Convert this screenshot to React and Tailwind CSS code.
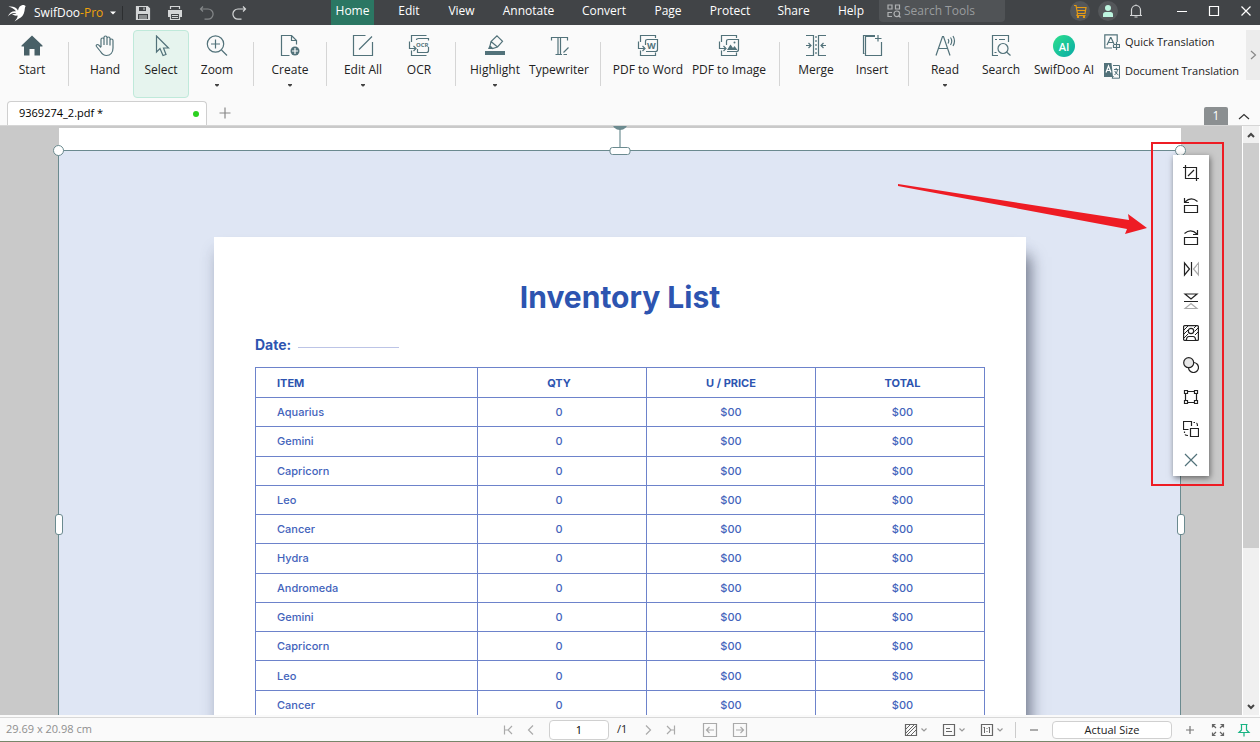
import React from "react";
import { clsx } from "clsx";

const Icon = ({ size = 22, className, children }) => (
  <svg
    width={size}
    height={size}
    viewBox={`0 0 ${size} ${size}`}
    fill="none"
    stroke="currentColor"
    strokeWidth="1.2"
    aria-hidden="true"
    className={clsx("shrink-0", className)}
  >
    {children}
  </svg>
);

const Caret = ({ className }) => (
  <svg width="6" height="4" viewBox="0 0 6 4" className={className} aria-hidden="true">
    <path d="M0 .5H6L3 3.5Z" fill="currentColor" />
  </svg>
);

/* ribbon icons */

const StartIcon = () => (
  <Icon>
    <path d="M11 0.5L21.5 10.5V11.5H19V20.5H13.5V14H8.5V20.5H3V11.5H0.5V10.5Z" fill="#486067" stroke="none" />
  </Icon>
);

const HandIcon = () => (
  <Icon>
    <path d="M7 12V4.5a1.5 1.5 0 0 1 3 0V10M10 4.5V2.5a1.5 1.5 0 0 1 3 0V10M13 3.5a1.5 1.5 0 0 1 3 0V10.5M16 5.5a1.5 1.5 0 0 1 3 0V13c0 4.5-2.5 7.5-6.5 7.5-3 0-4.5-1.5-6-4L2.5 11.5c-1-1.7 1-2.7 2.3-1.3L7 12.5" />
  </Icon>
);

const SelectIcon = () => (
  <Icon>
    <path d="M6.5 1V17L10 13.5L13 20.5L16 19.5L13.5 13H18.5Z" />
  </Icon>
);

const ZoomIcon = () => (
  <Icon>
    <circle cx="9.5" cy="9" r="8.2" />
    <path d="M9.5 4.5V13.5M5 9H14M15.5 15L21 20.5" />
  </Icon>
);

const CreateIcon = () => (
  <Icon>
    <path d="M10.5 20.5H2.5V.5H12.5L17.5 5.5V9.5M12.5 .5V5.5H17.5" />
    <circle cx="16" cy="16" r="4.5" fill="currentColor" stroke="none" />
    <path d="M16 13V19M13 16H19" stroke="#fff" />
  </Icon>
);

const EditIcon = () => (
  <Icon>
    <path d="M13.5 .5H1.5V20.5H20.5V7M7 14.5L20 1.5" />
  </Icon>
);

const ConvertFrame = ({ children }) => (
  <Icon>
    <path d="M3.5 7V.5H18.5V3M3.5 15.5V20.5H18.5V17.5M1.5 6.5V13.5H7M5.5 11L8 13.5L5.5 16" />
    <path d="M8.5 10V6.5Q8.5 4.5 10.5 4.5H20.5V14.5Q20.5 16.5 18.5 16.5H9" />
    {children}
  </Icon>
);

const OcrIcon = () => (
  <Icon>
    <path d="M3.5 7V.5H18.5M3.5 15.5V20.5H18.5M1.5 6.5V13.5H7M5.5 11L8 13.5L5.5 16" />
    <path d="M8.5 5V4.5Q8.5 3.5 10.5 3.5H20.5V5.5M20.5 12V15.5Q20.5 17.5 18.5 17.5H9.5V14" />
    <text x="8" y="11.5" fontSize="6" fontWeight="700" fill="currentColor" stroke="none">OCR</text>
  </Icon>
);

const HighlightIcon = () => (
  <Icon>
    <path d="M1 16H21V20H1Z" fill="currentColor" stroke="none" />
    <path d="M13 .8L18.5 6.3L13.5 12L8.5 13.5L6 11L7 6.5ZM7 6.5L13.5 12" />
    <path d="M5.5 10.5L9 14H4Z" fill="currentColor" stroke="none" />
  </Icon>
);

const TypewriterIcon = () => (
  <Icon>
    <path d="M3.5 5.5V2.5H19.5V5.5M10 3V19.5M12.5 3V19.5M7.5 19.5H14M15.5 19.5H19M15.5 17.5L20.5 12.5" />
  </Icon>
);

const ToWordIcon = () => (
  <ConvertFrame>
    <text x="10" y="14" fontSize="9" fontWeight="700" fill="currentColor" stroke="none">W</text>
  </ConvertFrame>
);

const ToImageIcon = () => (
  <ConvertFrame>
    <path d="M9 15L12.5 9.5L15 13L16.5 11L19.5 15Z" fill="currentColor" stroke="none" />
    <circle cx="16.5" cy="7.5" r="1" fill="currentColor" stroke="none" />
  </ConvertFrame>
);

const MergeIcon = () => (
  <Icon>
    <path d="M1 .5H8.5V20.5H1M21 .5H13.5V20.5H21M1 10.5H6M3.5 8L6 10.5L3.5 13M21 10.5H16M18.5 8L16 10.5L18.5 13" />
    <path d="M11 1V21" strokeDasharray="2 2" />
  </Icon>
);

const InsertIcon = () => (
  <Icon>
    <path d="M14 1.5H4.5V20.5H20.5V7M3.5 18.5H2.5V.5H14M17 0V6.5M14 3.5H20.5" />
  </Icon>
);

const ReadIcon = () => (
  <Icon>
    <path d="M2 20.5L8.5 1.5H9.5L16 20.5M4.5 13.5H13.5M14 4Q15.5 6 14 8.5M16.5 2.5Q19 6 16.5 10M19 1Q22 6 19 11" />
  </Icon>
);

const SearchIcon = () => (
  <Icon>
    <path d="M8 20.5H2.5V.5H18.5V7M5 4.5H7M9 4.5H15M4.5 17.5H6.5" />
    <circle cx="13" cy="13.5" r="5" />
    <path d="M16.5 17L20.5 20.5" />
  </Icon>
);

const AiIcon = () => (
  <span className="flex h-[22px] w-[22px] items-center justify-center rounded-full bg-linear-to-br from-[#2ce08a] to-[#0aa9a5] text-[11px] leading-none font-semibold text-white">
    AI
  </span>
);

const ribbon = [
  [{ label: "Start", icon: StartIcon }],
  [
    { label: "Hand", icon: HandIcon },
    { label: "Select", icon: SelectIcon, active: true },
    { label: "Zoom", icon: ZoomIcon, menu: true },
  ],
  [{ label: "Create", icon: CreateIcon, menu: true }],
  [
    { label: "Edit All", icon: EditIcon, menu: true },
    { label: "OCR", icon: OcrIcon },
  ],
  [
    { label: "Highlight", icon: HighlightIcon, menu: true, width: "w-[62px]" },
    { label: "Typewriter", icon: TypewriterIcon, width: "w-[66px]" },
  ],
  [
    { label: "PDF to Word", icon: ToWordIcon, width: "w-[78px]" },
    { label: "PDF to Image", icon: ToImageIcon, width: "w-[84px]" },
  ],
  [
    { label: "Merge", icon: MergeIcon },
    { label: "Insert", icon: InsertIcon },
  ],
  [
    { label: "Read", icon: ReadIcon, menu: true },
    { label: "Search", icon: SearchIcon },
    { label: "SwifDoo AI", icon: AiIcon, width: "w-[70px]" },
  ],
];

const menus = [
  { label: "Edit", width: "w-[50px]" },
  { label: "View", width: "w-[55px]" },
  { label: "Annotate", width: "w-[79px]" },
  { label: "Convert", width: "w-[72px]" },
  { label: "Page", width: "w-[56px]" },
  { label: "Protect", width: "w-[68px]" },
  { label: "Share", width: "w-[59px]" },
  { label: "Help", width: "w-[56px]" },
];

const TitleBar = () => (
  <header className="flex h-[25px] shrink-0 items-center bg-[#414447] text-white">
    <div className="flex w-[331px] shrink-0 items-center">
      <svg width="20" height="18" viewBox="0 0 20 18" className="ml-[7px]" fill="#fff" aria-hidden="true">
        <path d="M11 6.5C11.5 3.5 13 1.5 15.5 1C17 .7 17.5 1.5 18.8 2C17.8 3 18 4.5 17.5 7C16.8 11 14.5 13.5 12 14.5L7.5 17.5C9.5 15 11 13 10.5 11.5C8 12 6 11 5 10C7 10.2 8.5 10 9.5 9.3C6 8.2 3.5 9.5 .8 12.5C2.5 8.5 5.5 6.8 9 7.3C7 4.8 4.5 3.2 1.5 2.8C5.5 1.8 9.5 3.5 11 6.5Z" />
      </svg>
      <span className="ml-[7px] w-[68px] text-xs whitespace-nowrap">
        SwifDoo<span className="text-[#f0a30a]">-Pro</span>
      </span>
      <button aria-label="Application menu" className="ml-2 flex h-5 w-[6px] items-center">
        <Caret />
      </button>
      <span className="ml-[6px] h-[14px] w-px bg-[#2c2e30]" />
      <button aria-label="Save" className="ml-3 flex w-4 justify-center text-[#d4d6d7]">
        <Icon size={16}>
          <path d="M1.5 1.5H12.5L14.5 3.5V14.5H1.5Z" fill="currentColor" />
          <path d="M4 2H11V6H4ZM3 9H13V14H3Z" fill="#414447" stroke="none" />
          <path d="M9 2.5V5M4 11H12M4 13H12" strokeWidth="1" />
        </Icon>
      </button>
      <button aria-label="Print" className="ml-4 flex w-4 justify-center text-[#d4d6d7]">
        <Icon size={16}>
          <path d="M3.5 4V1.5H12.5V4" />
          <path d="M1 5H15V12H1Z" fill="currentColor" stroke="none" />
          <path d="M3.5 8.5H12.5V14.5H3.5Z" fill="#414447" />
          <path d="M5 10.5H11M5 12.5H11" strokeWidth="1" />
        </Icon>
      </button>
      <button aria-label="Undo" className="ml-4 flex w-4 justify-center text-[#85888a]">
        <Icon size={16}>
          <path d="M4 1.5L1.5 4L4 6.5M1.5 4H9A5 5 0 0 1 9 14.2H5.5" />
        </Icon>
      </button>
      <button aria-label="Redo" className="ml-4 flex w-4 justify-center text-[#d4d6d7]">
        <Icon size={16}>
          <path d="M12 1.5L14.5 4L12 6.5M14.5 4H7A5 5 0 0 0 7 14.2H10.5" />
        </Icon>
      </button>
    </div>

    <nav className="flex h-full items-center text-xs">
      <button className="mr-[10px] h-full w-[43px] bg-[#2b7763] pb-[3px]">Home</button>
      {menus.map((menu) => (
        <button key={menu.label} className={clsx("h-full pb-[3px]", menu.width)}>
          {menu.label}
        </button>
      ))}
    </nav>

    <label className="flex h-[22px] w-[126px] shrink-0 items-center gap-[3px] self-start rounded-b-sm bg-[#505356] pl-2 text-[#b0b2b4]">
      <Icon size={14}>
        <path d="M1 1H5V5H1ZM8.5 1H12.5V5H8.5ZM5 8.5H1V12.5H5" />
        <circle cx="9.8" cy="9.8" r="2.8" />
        <path d="M11.5 11.5L13.5 13.5" />
      </Icon>
      <input
        aria-label="Search Tools"
        placeholder="Search Tools"
        className="w-full min-w-0 bg-transparent text-xs outline-none placeholder:text-[#999c9e]"
      />
    </label>

    <div className="ml-auto flex items-center pr-[2px]">
      <button aria-label="Store" className="mb-1 flex h-5 w-5 items-center justify-center rounded-full bg-[#54575a] text-[#e69b13]">
        <Icon size={14}>
          <path d="M1 1.5H3L4.5 9.5H12L13 3.5H3.5M4.5 6.5H12.5M4.5 9.5L4 11.5H12.5" />
          <circle cx="5" cy="13" r=".6" />
          <circle cx="11" cy="13" r=".6" />
        </Icon>
      </button>
      <button aria-label="Account" className="mb-1 ml-2 flex h-5 w-5 items-center justify-center rounded-full bg-[#54575a] text-[#bdf5df]">
        <Icon size={14}>
          <circle cx="7" cy="4" r="3" fill="currentColor" stroke="none" />
          <path d="M2 13V10.5Q2 8 4.5 8H9.5Q12 8 12 10.5V13Z" fill="currentColor" stroke="none" />
        </Icon>
      </button>
      <button aria-label="Notifications" className="mr-[23px] mb-1 ml-[11px] text-[#d4d6d7]">
        <Icon size={14}>
          <path d="M1 11.5H13M2.5 11V6A4.5 4.5 0 0 1 11.5 6V11M7 .5V1.5M5.5 13H8.5" />
        </Icon>
      </button>
      <button aria-label="Minimize" className="mb-[3px] flex w-8 justify-center">
        <Icon size={12}>
          <path d="M1 6.5H11" strokeWidth="1" />
        </Icon>
      </button>
      <button aria-label="Maximize" className="mb-[3px] flex w-8 justify-center">
        <Icon size={12}>
          <path d="M1.5 1.5H10.5V10.5H1.5Z" />
        </Icon>
      </button>
      <button aria-label="Close" className="mb-[3px] flex w-7 justify-center pl-1">
        <Icon size={12}>
          <path d="M1.5 1.5L10.5 10.5M10.5 1.5L1.5 10.5" />
        </Icon>
      </button>
    </div>
  </header>
);

const RibbonButton = ({ label, icon: Glyph, active, menu, width = "w-14" }) => (
  <button
    className={clsx(
      "flex h-[68px] shrink-0 flex-col items-center rounded-sm border pt-1 text-[#52727a]",
      width,
      active ? "border-[#bfe9da] bg-[#e6f4ee]" : "border-transparent"
    )}
  >
    <Glyph />
    <span className="mt-1 text-xs leading-[18px] whitespace-nowrap text-[#222]">{label}</span>
    {menu && (
      <svg width="4" height="3" viewBox="0 0 4 3" className="mt-[5px] text-[#444]" aria-hidden="true">
        <path d="M0 0H4V1L2.5 2.5H1.5L0 1Z" fill="currentColor" />
      </svg>
    )}
  </button>
);

const Ribbon = () => (
  <div className="flex h-[73px] shrink-0 pt-[5px] pl-1">
    {ribbon.map((group, i) => (
      <div key={i} className="flex shrink-0">
        {i > 0 && <span className="mx-2 mt-3 h-11 w-px bg-[#d5d5d5]" />}
        {group.map((item) => (
          <RibbonButton key={item.label} {...item} />
        ))}
      </div>
    ))}
    <div className="ml-[5px] flex min-w-0 flex-1 flex-col gap-3 pt-[3px] text-[11px] text-[#222]">
      <button className="flex items-center gap-[5px] leading-[17px] whitespace-nowrap">
        <Icon size={16} className="text-[#52727a]">
          <path d="M8 14H.8V.8H13.2V8M3 11L6.5 3.5H7L10 10M4 8.5H9M12.5 8V16M10 10.5H15.5V13.5H9.5V10.5" />
        </Icon>
        Quick Translation
      </button>
      <button className="flex items-center gap-[5px] leading-[17px] whitespace-nowrap">
        <Icon size={16} className="text-[#52727a]">
          <path d="M0 0H7.5L9 14H0Z" fill="currentColor" stroke="none" />
          <path d="M2 9.5L4.5 3L7 9.5M3 7.5H6" stroke="#fff" />
          <path d="M9 2.5H15.5V15.2H8L9.5 13M10 6.5H14.5M12.2 5V6.5M10.5 12Q13 10.5 13.5 7M10.8 8Q11.5 10.5 14.5 12" strokeWidth="1" />
        </Icon>
        Document Translation
      </button>
    </div>
    <button aria-label="Scroll ribbon right" className="flex h-[50px] w-[14px] shrink-0 items-center justify-center bg-[#ececec] text-[#888]">
      <Icon size={12}>
        <path d="M4 2L8.5 6L4 10" />
      </Icon>
    </button>
  </div>
);

const TabStrip = () => (
  <div className="flex h-7 shrink-0 items-end border-b border-[#d6d6d6] pl-[7px]">
    <div className="flex h-6 w-[200px] items-center rounded-t-[4px] border border-b-0 border-[#cfcfcf] bg-white pr-[7px] pl-[11px] text-[11px] text-black">
      9369274_2.pdf *
      <span className="ml-auto h-[6px] w-[6px] rounded-full bg-[#2bd11f]" />
    </div>
    <button aria-label="New tab" className="mb-[6px] ml-3 text-[#888]">
      <Icon size={12}>
        <path d="M6 .5V11.5M.5 6H11.5" />
      </Icon>
    </button>
    <button className="ml-auto h-[18px] w-6 rounded-t-xs bg-[#8b8f91] text-xs leading-4 text-white">1</button>
    <button aria-label="Collapse ribbon" className="mr-[10px] mb-[2px] ml-[10px] text-[#333]">
      <Icon size={12}>
        <path d="M1 8L6 3.5L11 8" />
      </Icon>
    </button>
  </div>
);

const items = [
  "Aquarius",
  "Gemini",
  "Capricorn",
  "Leo",
  "Cancer",
  "Hydra",
  "Andromeda",
  "Gemini",
  "Capricorn",
  "Leo",
  "Cancer",
];

const InventorySheet = () => (
  <article className="mt-[86px] mr-[154px] ml-[155px] h-[600px] bg-white px-[41px] pt-10 font-[Inter,sans-serif] text-[#2d54b0] shadow-[7px_18px_14px_-2px_rgba(40,45,65,0.5),0px_12px_14px_0px_rgba(70,80,110,0.2)]">
    <h1 className="text-center text-[30px] leading-10 font-bold">Inventory List</h1>
    <div className="mt-[18px] flex h-5 items-center text-sm font-bold">
      Date:
      <span className="mt-[5px] ml-[7px] h-px w-[101px] bg-[#bcc4e6]" />
    </div>
    <table className="mt-3 h-[353px] w-full table-fixed border-collapse text-[11px] leading-4 [&_td]:border [&_td]:border-[#6d83cb] [&_td]:p-0 [&_th]:h-[30px] [&_th]:border [&_th]:border-[#6d83cb] [&_th]:p-0">
      <colgroup>
        <col className="w-[222px]" />
        <col />
        <col />
        <col />
      </colgroup>
      <thead>
        <tr>
          <th className="text-left">
            <span className="pl-[21px]">ITEM</span>
          </th>
          <th>
            <span className="pr-[6px]">QTY</span>
          </th>
          <th>U / PRICE</th>
          <th>
            <span className="pl-[5px]">TOTAL</span>
          </th>
        </tr>
      </thead>
      <tbody className="text-center font-medium text-[#4363bb]">
        {items.map((item, i) => (
          <tr key={i}>
            <td className="text-left">
              <span className="pl-[21px]">{item}</span>
            </td>
            <td>
              <span className="pr-[6px]">0</span>
            </td>
            <td>$00</td>
            <td>
              <span className="pl-[5px]">$00</span>
            </td>
          </tr>
        ))}
      </tbody>
    </table>
  </article>
);

const tools = [
  {
    label: "Crop",
    path: <path d="M0 2.5H13.5V16M2.5 0V13.5H16M5 11L11 5" />,
  },
  {
    label: "Rotate left",
    path: <path d="M1.5 8.5H14.5V15.5H1.5ZM1.5 1V5.5H6M2 5Q8-1 14.5 4.5" />,
  },
  {
    label: "Rotate right",
    path: <path d="M1.5 8.5H14.5V15.5H1.5ZM14.5 1V5.5H10M14 5Q8-1 1.5 4.5" />,
  },
  {
    label: "Flip horizontal",
    path: (
      <>
        <path d="M1.5 2V14L6.5 8ZM8.5 1V15" />
        <path d="M15.5 2V14L10.5 8Z" stroke="#aaa" />
      </>
    ),
  },
  {
    label: "Flip vertical",
    path: (
      <>
        <path d="M2 1H14L8 6ZM1 8.5H15" />
        <path d="M2 15.5H14L8 10.5Z" stroke="#aaa" />
      </>
    ),
  },
  {
    label: "Picture",
    path: (
      <>
        <rect x=".6" y=".6" width="14.8" height="14.8" rx="1" />
        <path d="M1 5L5 1M1 9L5 5M1 13L5 9M11 3L13 1M11.5 6.5L15 3M12 10L15 7" strokeWidth="1" />
        <circle cx="8" cy="6" r="2.7" fill="#fff" />
        <path d="M3.5 15Q3.5 11.5 6 11.5H10Q12.5 11.5 12.5 15" fill="#fff" />
      </>
    ),
  },
  {
    label: "Opacity",
    path: (
      <>
        <circle cx="10.5" cy="10.5" r="5" />
        <circle cx="5.7" cy="5.7" r="5" fill="#e8e8e8" />
      </>
    ),
  },
  {
    label: "Transform",
    path: (
      <path d="M4.5 2.5H11.5M4.5 13.5H11.5M2.5 4.5V11.5M13.5 4.5V11.5M1.5 1.5H4.5V4.5H1.5ZM11.5 1.5H14.5V4.5H11.5ZM1.5 11.5H4.5V14.5H1.5ZM11.5 11.5H14.5V14.5H11.5Z" />
    ),
  },
  {
    label: "Replace",
    path: (
      <path d="M5.5 8.5H.5V.5H8.5V5M7.5 7.5H15.5V15.5H7.5ZM10.5 1.5H12M13.5 2Q14.5 2.5 14.5 5M1.5 10.5V12M2 13.5Q2.5 14.5 5 14.5" />
    ),
  },
];

const ImageToolbar = () => (
  <div role="toolbar" aria-label="Image tools" className="absolute top-[29px] right-[33px] flex w-9 flex-col bg-white pt-[2px] text-[#222] shadow-[1px_2px_6px_rgba(0,0,0,0.5)]">
    {tools.map((tool) => (
      <button key={tool.label} aria-label={tool.label} className="flex h-8 items-center justify-center">
        <Icon size={16}>{tool.path}</Icon>
      </button>
    ))}
    <button aria-label="Close tools" className="flex h-[31px] items-center justify-center pb-px text-[#52727a]">
      <Icon size={16}>
        <path d="M2 2L14 14M14 2L2 14" />
      </Icon>
    </button>
  </div>
);

const Handle = ({ className }) => (
  <span className={clsx("absolute border border-[#6b8a8f] bg-white", className)} />
);

const Workspace = () => (
  <main className="flex min-h-0 flex-1 bg-[#c9c9c9]">
    <div className="relative min-w-0 flex-1 overflow-hidden">
      <div className="mt-[2px] mr-[61px] ml-[59px] bg-white pt-[22px]">
        <div className="relative -ml-px flow-root h-[700px] border border-[#6b8a8f] bg-[#dfe6f4]">
          <InventorySheet />
          <span className="absolute -top-7 left-1/2 h-7 w-[2px] -translate-x-1/2 bg-[#a9bcbf]" />
          <span className="absolute -top-[37px] left-1/2 h-4 w-4 -translate-x-1/2 rounded-full bg-[#6b8a8f]" />
          <Handle className="-top-[6px] -left-[6px] h-[11px] w-[11px] rounded-full" />
          <Handle className="-top-[6px] -right-[6px] h-[11px] w-[11px] rounded-full" />
          <Handle className="-top-1 left-1/2 h-2 w-[21px] -translate-x-1/2 rounded-[3px]" />
          <Handle className="top-[363px] -left-1 h-[21px] w-2 rounded-[3px]" />
          <Handle className="top-[363px] -right-[5px] h-[21px] w-2 rounded-[3px]" />
        </div>
      </div>
      <ImageToolbar />
      <div className="pointer-events-none absolute top-4 right-[18px] h-[344px] w-[73px] border-2 border-[#ee1c24]" />
      <svg width="250" height="54" viewBox="0 0 250 54" className="pointer-events-none absolute top-[57px] right-[94px]" aria-hidden="true">
        <path d="M0 1L231 37L230 31L249 45L227 51L229 46L0 3Z" fill="#ee1c24" />
      </svg>
    </div>

    <div className="flex w-[18px] shrink-0 flex-col border-x border-white bg-[#f0f0f0] text-[#444]">
      <button aria-label="Scroll up" className="flex h-[17px] items-center justify-center">
        <Icon size={10}>
          <path d="M2 7L5 4L8 7" strokeWidth="2" />
        </Icon>
      </button>
      <div className="min-h-0 flex-1">
        <div className="h-[73%] bg-[#cdcdcd]" />
      </div>
      <button aria-label="Scroll down" className="flex h-[17px] items-center justify-center">
        <Icon size={10}>
          <path d="M2 3L5 6L8 3" strokeWidth="2" />
        </Icon>
      </button>
    </div>
  </main>
);

const NavButton = ({ label, d, className }) => (
  <button aria-label={label} className={clsx("flex w-4 shrink-0 justify-center", className)}>
    <Icon size={16}>
      <path d={d} />
    </Icon>
  </button>
);

const ViewButton = ({ label, children }) => (
  <button aria-label={label} className="flex items-center text-[#666]">
    <Icon size={14}>
      <path d="M1.5 1.5H12.5V12.5H1.5Z" />
      {children}
    </Icon>
    <Icon size={8} className="mr-2 ml-[2px] text-[#999]">
      <path d="M1.5 2.5L4 5L6.5 2.5" />
    </Icon>
  </button>
);

const StatusBar = () => (
  <footer className="shrink-0 border-b border-[#77866a] pt-[2px] text-[11px]">
    <div className="flex h-6 items-center border-t border-[#d8d8d8]">
      <span className="w-[500px] pl-[6px] text-[#8f8f8f]">29.69 x 20.98 cm</span>
      <NavButton label="First page" className="text-[#aaa]" d="M4.5 3.5V12.5M12 4L8 8L12 12M5 8H8" />
      <NavButton label="Previous page" className="ml-[7px] text-[#aaa]" d="M10 3.5L5.5 8L10 12.5" />
      <input
        aria-label="Page number"
        defaultValue="1"
        className="ml-[10px] h-5 w-[60px] rounded-[4px] border border-[#d0d0d0] bg-white text-center text-black outline-none"
      />
      <span className="ml-2 w-[14px] text-[#222]">/1</span>
      <NavButton label="Next page" className="ml-[9px] text-[#aaa]" d="M6 3.5L10.5 8L6 12.5" />
      <NavButton label="Last page" className="ml-[7px] text-[#aaa]" d="M11.5 3.5V12.5M4 4L8 8L4 12M8 8H11" />
      <NavButton label="Previous view" className="ml-[23px] text-[#aaa]" d="M1.5 1.5H14.5V14.5H1.5ZM12 8H4.5M7.5 5L4.5 8L7.5 11" />
      <NavButton label="Next view" className="ml-[14px] text-[#aaa]" d="M1.5 1.5H14.5V14.5H1.5ZM4 8H11.5M8.5 5L11.5 8L8.5 11" />

      <div className="ml-auto flex items-center gap-[6px]">
        <ViewButton label="Background">
          <path d="M2 6L6 2M2 10L10 2M3 12L12 3M7 12L12 7" strokeWidth="1" />
        </ViewButton>
        <ViewButton label="Page layout">
          <path d="M4 5.5H8M4 8.5H10" strokeWidth="1" />
        </ViewButton>
        <ViewButton label="Zoom mode">
          <path d="M4.5 4V10M9.5 4V10M3.5 5L4.5 4M8.5 5L9.5 4M7 5V6M7 8V9" strokeWidth="1" />
        </ViewButton>
      </div>
      <span className="ml-[3px] h-4 w-px bg-[#ccc]" />
      <NavButton label="Zoom out" className="ml-[10px] text-[#777]" d="M4 8H12" />
      <input
        aria-label="Zoom level"
        defaultValue="Actual Size"
        className="ml-[10px] h-[18px] w-[120px] rounded-[4px] border border-[#d0d0d0] bg-white text-center text-[#222] outline-none"
      />
      <NavButton label="Zoom in" className="ml-[10px] text-[#777]" d="M4 8H12M8 4V12" />
      <button aria-label="Full screen" className="ml-[13px] text-[#666]">
        <Icon size={14}>
          <path d="M1.5 4.5V1.5H4.5M9.5 1.5H12.5V4.5M12.5 9.5V12.5H9.5M4.5 12.5H1.5V9.5M2 2L5 5M12 2L9 5M2 12L5 9M12 12L9 9" />
        </Icon>
      </button>
      <button aria-label="Pin" className="mr-[9px] ml-3 text-[#17b383]">
        <Icon size={14}>
          <path d="M3.5 1.5H10.5M4.5 1.5V7L2 9.5H12L9.5 7V1.5M7 9.5V13.5" />
        </Icon>
      </button>
    </div>
  </footer>
);

export default function App() {
  return (
    <div className="flex h-screen flex-col overflow-hidden bg-[#fafafa] font-['Open_Sans','Noto_Sans',sans-serif]">
      <TitleBar />
      <Ribbon />
      <TabStrip />
      <Workspace />
      <StatusBar />
    </div>
  );
}
